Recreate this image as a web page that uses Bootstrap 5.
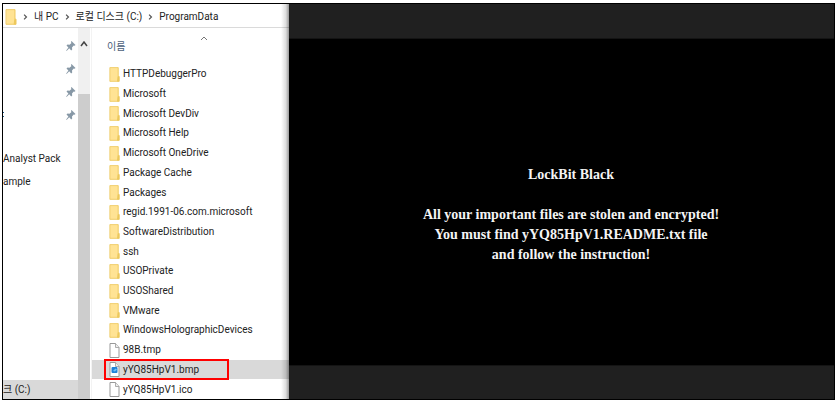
<!DOCTYPE html>
<html lang="ko">
<head>
<meta charset="utf-8">
<meta name="viewport" content="width=device-width, initial-scale=1">
<title>ProgramData</title>
<link rel="stylesheet" href="https://cdn.jsdelivr.net/npm/bootstrap@5.3.0/dist/css/bootstrap.min.css">
<style>
body{background:#fff;color:#222;font:10px/16px Roboto,"Noto Sans CJK KR",sans-serif}
.page{padding:3px 1px 3px 2px}
.frame{border:1px solid #000}
.explorer{flex:0 0 286px}
.explorer::after{content:"";position:absolute;inset:0 0 0 auto;width:8px;background:linear-gradient(90deg,transparent,#0002 60%,#0006);pointer-events:none}
.address{height:24px;border-bottom:1px solid #dadada;padding:2px 0 0 2px}
.address a{color:#222}
.address svg{flex:none}
.sep{width:17px;height:8px;fill:none;stroke:#555;stroke-width:1.3}
.side{flex:0 0 75px}
.pins{padding:6px 2px 0 0}
.pin{height:23px}
.pin svg{width:10px;height:12px}
.clipped::before{content:"";width:1px;height:5px;border:solid #1d5f8f;border-width:1px 0;margin-right:auto}
.tree a{color:#222;height:23px;line-height:23px}
.tree{margin-top:21px}
.tree .drive{background:#d9d9d9;height:19px;line-height:19px}
.bar{flex:0 0 12px;background:#f0f0f0}
.bar button{height:16px;line-height:0;margin-top:8px}
.thumb{background:#cdcdcd;margin-top:42px}
.files{border-left:1px solid #f3f3f3;margin-left:1px}
.head{height:36px;padding:10px 0 0 15px;color:#4c607a}
.head button{color:inherit;font-size:10px;line-height:18px}
.sortmark{width:8px;height:5px;margin:-2px 0 0 75px}
.entry{color:#222;min-height:19px;padding:1px 0 0 17px;gap:3px;line-height:18px}
.entry svg{width:11px;height:15px;flex:none}
.chosen{background:#d9d9d9}
.marked::before{content:"";position:absolute;left:12px;width:125px;top:-1px;bottom:-1px;border:2px solid #f00}
.viewer{background:#000;color:#f4f4f4}
.band-top{height:35px;background:#202020;border-bottom:1px solid #141414}
.band-bottom{height:34px;background:#202020;border-top:1px solid #141414}
.note{font:bold 14px/20px "Liberation Serif",serif;padding:26px 0 0 19px}
</style>
<script src="https://cdn.jsdelivr.net/npm/bootstrap@5.3.0/dist/js/bootstrap.bundle.min.js"></script>
</head>
<body>
<svg class="d-none" aria-hidden="true">
<symbol id="folder" viewBox="0 0 11 15"><path d="M1 .5h8.500v9H10v5H1z" fill="#ffe394"/><path d="M8.500 9.500h1.800v5H8z" fill="#edc95c"/><path d="M.8 14.300V.6h8.400v8.900h1v4.800z" fill="none" stroke="#ecc65a" stroke-width=".8"/></symbol>
<symbol id="page" viewBox="0 0 11 15"><path d="M1 .5h5.500l3.500 4v10H1z" fill="#fff" stroke="#999"/><path d="M6.500.5v4H10" fill="#eee" stroke="#999" stroke-width=".8"/></symbol>
<symbol id="image" viewBox="0 0 11 15"><use href="#page"/><rect x="2.500" y="5" width="6" height="6" rx="1" fill="#1d80d8"/><path d="m4 9 2.500-2.500 1.500 1-2 2z" fill="#6bc0f7"/></symbol>
<symbol id="pin" viewBox="0 0 10 12"><path d="m5.500 1 4 4-1 .8-.8-.2-1.700 2 .2 2-1 .9-2-2.200L.6 11l-.4-.4L2.400 7.500.5 5.400l1-.8 2 .2 2-1.900-.6-.9z" fill="#8798a6"/></symbol>
<symbol id="right" viewBox="0 0 18 8"><path d="m7.500 1.500 2.500 2.500-2.500 2.500"/></symbol>
</svg>
<main class="page vh-100">
<div class="frame h-100 d-flex overflow-hidden">
<section class="explorer position-relative d-flex flex-column">
<nav class="address d-flex align-items-center" aria-label="주소">
<svg width="12" height="16"><use href="#folder"/></svg>
<svg class="sep"><use href="#right"/></svg><a class="text-decoration-none" href="#">내 PC</a>
<svg class="sep"><use href="#right"/></svg><a class="text-decoration-none" href="#">로컬 디스크 (C:)</a>
<svg class="sep"><use href="#right"/></svg><a class="text-decoration-none" href="#">ProgramData</a>
</nav>
<div class="d-flex flex-grow-1">
<aside class="side d-flex flex-column overflow-hidden">
<div class="pins d-flex flex-column">
<div class="pin d-flex align-items-center justify-content-end"><svg><use href="#pin"/></svg></div>
<div class="pin d-flex align-items-center justify-content-end"><svg><use href="#pin"/></svg></div>
<div class="pin d-flex align-items-center justify-content-end"><svg><use href="#pin"/></svg></div>
<div class="pin clipped d-flex align-items-center justify-content-end"><svg><use href="#pin"/></svg></div>
</div>
<div class="tree d-flex flex-column flex-grow-1 text-nowrap">
<a class="text-decoration-none" href="#">Analyst Pack</a>
<a class="text-decoration-none" href="#">ample</a>
<a class="drive text-decoration-none mt-auto" href="#">크 (C:)</a>
</div>
</aside>
<div class="bar d-flex flex-column">
<button class="btn p-0 border-0 rounded-0" type="button" aria-label="위로"><svg width="8" height="6"><path d="m1 5 3-4 3 4" fill="none" stroke="#444" stroke-width="1.500"/></svg></button>
<div class="thumb flex-grow-1"></div>
</div>
<div class="files d-flex flex-column flex-grow-1">
<div class="head d-flex align-items-start"><button class="btn p-0 border-0" type="button">이름</button><svg class="sortmark" viewBox="0 0 8 5"><path d="m1 4 3-3 3 3" fill="none" stroke="#777"/></svg></div>
<div class="d-flex flex-column flex-grow-1">
<a class="entry flex-fill d-flex align-items-center text-decoration-none" href="#"><svg><use href="#folder"/></svg>HTTPDebuggerPro</a>
<a class="entry flex-fill d-flex align-items-center text-decoration-none" href="#"><svg><use href="#folder"/></svg>Microsoft</a>
<a class="entry flex-fill d-flex align-items-center text-decoration-none" href="#"><svg><use href="#folder"/></svg>Microsoft DevDiv</a>
<a class="entry flex-fill d-flex align-items-center text-decoration-none" href="#"><svg><use href="#folder"/></svg>Microsoft Help</a>
<a class="entry flex-fill d-flex align-items-center text-decoration-none" href="#"><svg><use href="#folder"/></svg>Microsoft OneDrive</a>
<a class="entry flex-fill d-flex align-items-center text-decoration-none" href="#"><svg><use href="#folder"/></svg>Package Cache</a>
<a class="entry flex-fill d-flex align-items-center text-decoration-none" href="#"><svg><use href="#folder"/></svg>Packages</a>
<a class="entry flex-fill d-flex align-items-center text-decoration-none" href="#"><svg><use href="#folder"/></svg>regid.1991-06.com.microsoft</a>
<a class="entry flex-fill d-flex align-items-center text-decoration-none" href="#"><svg><use href="#folder"/></svg>SoftwareDistribution</a>
<a class="entry flex-fill d-flex align-items-center text-decoration-none" href="#"><svg><use href="#folder"/></svg>ssh</a>
<a class="entry flex-fill d-flex align-items-center text-decoration-none" href="#"><svg><use href="#folder"/></svg>USOPrivate</a>
<a class="entry flex-fill d-flex align-items-center text-decoration-none" href="#"><svg><use href="#folder"/></svg>USOShared</a>
<a class="entry flex-fill d-flex align-items-center text-decoration-none" href="#"><svg><use href="#folder"/></svg>VMware</a>
<a class="entry flex-fill d-flex align-items-center text-decoration-none" href="#"><svg><use href="#folder"/></svg>WindowsHolographicDevices</a>
<a class="entry flex-fill d-flex align-items-center text-decoration-none" href="#"><svg><use href="#page"/></svg>98B.tmp</a>
<a class="entry chosen marked position-relative flex-fill d-flex align-items-center text-decoration-none" href="#"><svg><use href="#image"/></svg>yYQ85HpV1.bmp</a>
<a class="entry flex-fill d-flex align-items-center text-decoration-none" href="#"><svg><use href="#page"/></svg>yYQ85HpV1.ico</a>
</div>
</div>
</div>
</section>
<section class="viewer d-flex flex-column flex-grow-1">
<div class="band-top"></div>
<div class="note flex-grow-1 d-flex flex-column justify-content-center text-center">
<p class="mb-0">LockBit Black</p><p class="mb-0"><br>All your important files are stolen and encrypted!<br>You must find yYQ85HpV1.README.txt file<br>and follow the instruction!</p>
</div>
<div class="band-bottom"></div>
</section>
</div>
</main>
</body>
</html>
